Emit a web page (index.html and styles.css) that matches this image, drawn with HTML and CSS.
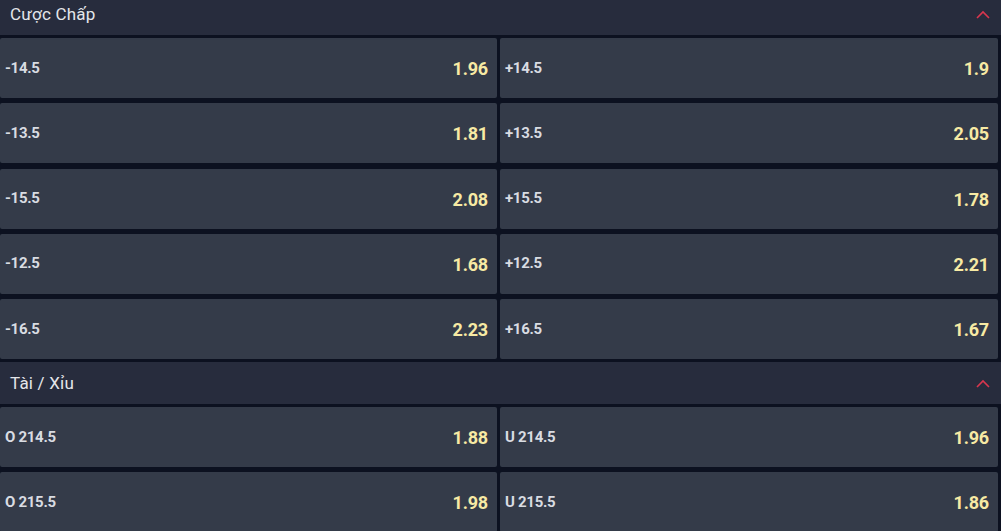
FILE: index.html
```html
<!DOCTYPE html>
<html lang="vi">
<head>
<meta charset="utf-8">
<link rel="stylesheet" href="styles.css">
</head>
<body>
<div class="markets">
  <section class="market">
    <div class="market-head">
      <span class="title">Cược Chấp</span>
      <svg class="chev" width="14" height="9" viewBox="0 0 14 9"><path d="M1 8 L7 2 L13 8" fill="none" stroke="#d8364e" stroke-width="1.6"/></svg>
    </div>
    <div class="grid">
      <div class="cell"><span class="lbl">-14.5</span><span class="odd">1.96</span></div>
      <div class="cell"><span class="lbl">+14.5</span><span class="odd">1.9</span></div>
      <div class="cell"><span class="lbl">-13.5</span><span class="odd">1.81</span></div>
      <div class="cell"><span class="lbl">+13.5</span><span class="odd">2.05</span></div>
      <div class="cell"><span class="lbl">-15.5</span><span class="odd">2.08</span></div>
      <div class="cell"><span class="lbl">+15.5</span><span class="odd">1.78</span></div>
      <div class="cell"><span class="lbl">-12.5</span><span class="odd">1.68</span></div>
      <div class="cell"><span class="lbl">+12.5</span><span class="odd">2.21</span></div>
      <div class="cell"><span class="lbl">-16.5</span><span class="odd">2.23</span></div>
      <div class="cell"><span class="lbl">+16.5</span><span class="odd">1.67</span></div>
    </div>
  </section>
  <section class="market">
    <div class="market-head">
      <span class="title">Tài / Xỉu</span>
      <svg class="chev" width="14" height="9" viewBox="0 0 14 9"><path d="M1 8 L7 2 L13 8" fill="none" stroke="#d8364e" stroke-width="1.6"/></svg>
    </div>
    <div class="grid">
      <div class="cell"><span class="lbl">O 214.5</span><span class="odd">1.88</span></div>
      <div class="cell"><span class="lbl">U 214.5</span><span class="odd">1.96</span></div>
      <div class="cell"><span class="lbl">O 215.5</span><span class="odd">1.98</span></div>
      <div class="cell"><span class="lbl">U 215.5</span><span class="odd">1.86</span></div>
    </div>
  </section>
</div>
</body>
</html>
```
FILE: styles.css
```css
html, body {
  margin: 0;
  padding: 0;
  background: #0c1120;
  overflow: hidden;
}
body {
  font-family: Roboto, "Liberation Sans", Arial, sans-serif;
  width: 1001px;
  height: 531px;
}
.markets {
  margin-top: -7px;
  display: flex;
  flex-direction: column;
  gap: 3px;
}
.market {
  display: flex;
  flex-direction: column;
  gap: 3px;
}
.market-head {
  height: 42px;
  background: #272c3d;
  display: flex;
  align-items: center;
  justify-content: space-between;
  padding: 0 11px 0 10px;
}
.title {
  color: #e4e6ea;
  font-size: 17px;
  font-weight: 400;
  letter-spacing: 0.2px;
}
.chev {
  display: block;
  margin-top: 1px;
}
.grid {
  display: grid;
  grid-template-columns: 497px 498px;
  column-gap: 3px;
  row-gap: 5.25px;
}
.cell {
  height: 60px;
  background: #343b49;
  border-radius: 2px;
  display: flex;
  align-items: center;
  justify-content: space-between;
  padding: 0 9px 0 5px;
  box-sizing: border-box;
}
.lbl {
  color: #d9dce2;
  font-size: 15px;
  font-weight: 700;
  margin-top: -1px;
  letter-spacing: -0.3px;
}
.odd {
  color: #f7eaa4;
  font-size: 18px;
  font-weight: 700;
  margin-top: 1px;
  letter-spacing: -0.2px;
}
```
